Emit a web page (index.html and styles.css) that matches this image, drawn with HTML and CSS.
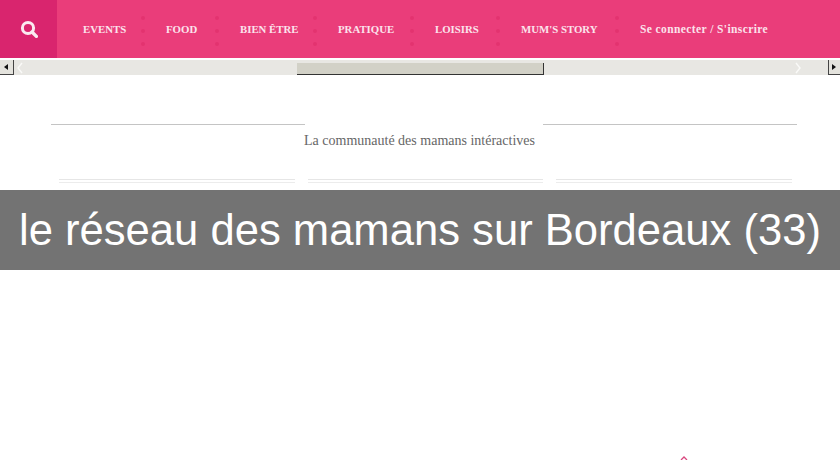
FILE: index.html
```html
<!DOCTYPE html>
<html lang="fr">
<head>
    <meta charset="UTF-8">
    <title>le réseau des mamans sur Bordeaux (33)</title>
    <link rel="stylesheet" href="styles.css">
</head>
<body>
    <header class="topbar">
        <div class="search">
            <svg width="18" height="18" viewBox="0 0 18 18">
                <circle cx="8" cy="8" r="5.6" fill="none" stroke="#fbeaf1" stroke-width="3"/>
                <path d="M12 12l4.4 4.4" stroke="#fbeaf1" stroke-width="3.4" stroke-linecap="round"/>
            </svg>
        </div>
        <nav class="menu">
            <a class="w42">EVENTS</a><span class="dots"><i></i><i></i><i></i></span>
            <a class="w33">FOOD</a><span class="dots"><i></i><i></i><i></i></span>
            <a class="w57">BIEN ÊTRE</a><span class="dots"><i></i><i></i><i></i></span>
            <a class="w56">PRATIQUE</a><span class="dots"><i></i><i></i><i></i></span>
            <a class="w45">LOISIRS</a><span class="dots"><i></i><i></i><i></i></span>
            <a class="w78">MUM'S STORY</a><span class="dots"><i></i><i></i><i></i></span>
            <a class="login">Se connecter / S'inscrire</a>
        </nav>
    </header>

    <div class="scrollbar">
        <div class="arrow left"></div>
        <div class="track">
            <svg class="chev" width="6" height="12" viewBox="0 0 6 12"><path d="M5 1L1 6l4 5" fill="none" stroke="#fafaf8" stroke-width="1.4"/></svg>
            <div class="thumb"></div>
            <svg class="chev end" width="6" height="12" viewBox="0 0 6 12"><path d="M1 1l4 5-4 5" fill="none" stroke="#fafaf8" stroke-width="1.4"/></svg>
        </div>
        <div class="arrow right"></div>
    </div>

    <div class="tagline">
        <div class="rule"></div>
        <p>La communauté des mamans intéractives</p>
        <div class="rule"></div>
    </div>

    <div class="columns">
        <div class="col"></div>
        <div class="col"></div>
        <div class="col"></div>
    </div>

    <h1 class="banner">le réseau des mamans sur Bordeaux (33)</h1>

    <svg class="caret" width="8" height="5" viewBox="0 0 8 5"><path d="M1 5l3-3 3 3" fill="none" stroke="#d9487f" stroke-width="1.3"/></svg>
</body>
</html>
```

FILE: styles.css
```css
html, body {
    height: 460px;
    overflow: hidden;
}

body {
    margin: 0;
    background: #fff;
    font-family: "Liberation Serif", serif;
}

.topbar {
    display: flex;
    height: 58px;
    background: #ea3d7a;
}

.search {
    display: flex;
    align-items: center;
    justify-content: center;
    flex: none;
    width: 57px;
    background: #d9256e;
}

.menu {
    display: flex;
    align-items: center;
    padding-left: 26px;
    color: #fbe3ec;
    font-size: 10.8px;
    font-weight: bold;
    white-space: nowrap;
}

.menu a {
    display: block;
    flex: none;
}

.w42 { width: 42px; }
.w33 { width: 33px; }
.w57 { width: 57px; }
.w56 { width: 56px; }
.w45 { width: 45px; }
.w78 { width: 78px; }

.menu .login {
    font-size: 11.5px;
    letter-spacing: 0.4px;
}

.dots {
    display: flex;
    flex: none;
    flex-direction: column;
    gap: 9px;
    align-items: center;
    box-sizing: border-box;
    width: 41px;
    padding: 4px 5px 0 0;
}

.dots i {
    width: 4px;
    height: 4px;
    border-radius: 50%;
    background: #e3336f;
}

.scrollbar {
    display: flex;
    height: 15px;
    margin-top: 2px;
    background: #e8e7e3;
}

.arrow {
    position: relative;
    flex: none;
    width: 13px;
    background: #e4e3dd;
    border-bottom: 1px solid #444;
}

.arrow::after {
    content: "";
    position: absolute;
    top: 4px;
    border: 3px solid transparent;
}

.arrow.left {
    border-right: 1px solid #444;
}

.arrow.left::after {
    left: 1px;
    border-right: 4px solid #111;
}

.arrow.right {
    border-left: 1px solid #444;
    width: 11px;
}

.arrow.right::after {
    left: 3px;
    border-left: 4px solid #111;
}

.track {
    display: flex;
    flex: 1;
    padding-left: 3px;
}

.chev {
    flex: none;
    margin-top: 2px;
}

.chev.end {
    margin-left: auto;
    margin-right: 27px;
}

.thumb {
    width: 246px;
    height: 11px;
    margin: 3px 0 0 274px;
    background: #d2d1c7;
    border-right: 1px solid #333;
    border-bottom: 1px solid #333;
}

.tagline {
    display: flex;
    margin: 49px 43px 0 51px;
    color: #666;
    font-size: 14px;
}

.tagline p {
    flex: none;
    margin: 9px 8px 0 -1px;
    line-height: 15px;
}

.rule {
    flex: 1;
    height: 1px;
    background: #c4c4c4;
}

.columns {
    display: flex;
    gap: 13px;
    margin: 31px 48px 0 59px;
}

.col {
    flex: 1;
    height: 2px;
    border-top: 1px solid #e6e6e6;
    border-bottom: 1px solid #ececec;
}

.banner {
    position: absolute;
    top: 190px;
    left: 0;
    width: 840px;
    height: 80px;
    margin: 0;
    background: #737373;
    color: #fff;
    font-family: "Liberation Sans", sans-serif;
    font-size: 43.6px;
    font-weight: normal;
    line-height: 80px;
    text-align: center;
    white-space: nowrap;
}

.caret {
    position: absolute;
    top: 455px;
    left: 680px;
}
```
